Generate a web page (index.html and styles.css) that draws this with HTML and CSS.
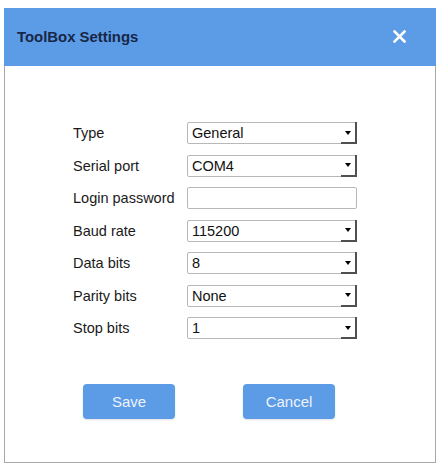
FILE: index.html
```html
<!DOCTYPE html>
<html>
<head>
<meta charset="utf-8">
<link rel="stylesheet" href="styles.css">
</head>
<body>
<div class="dialog">
  <div class="header">
    <span class="title">ToolBox Settings</span>
    <svg class="close" width="13" height="13" viewBox="0 0 13 13"><path d="M1.5 1.5 L11.5 11.5 M11.5 1.5 L1.5 11.5" stroke="#fff" stroke-width="2.6" stroke-linecap="square"/></svg>
  </div>
  <div class="content">
    <div class="form">
      <div class="row"><span class="label">Type</span><div class="select"><span class="value">General</span><span class="arrow"><i class="tri"></i></span></div></div>
      <div class="row"><span class="label">Serial port</span><div class="select"><span class="value">COM4</span><span class="arrow"><i class="tri"></i></span></div></div>
      <div class="row"><span class="label">Login password</span><div class="input"></div></div>
      <div class="row"><span class="label">Baud rate</span><div class="select"><span class="value">115200</span><span class="arrow"><i class="tri"></i></span></div></div>
      <div class="row"><span class="label">Data bits</span><div class="select"><span class="value">8</span><span class="arrow"><i class="tri"></i></span></div></div>
      <div class="row"><span class="label">Parity bits</span><div class="select"><span class="value">None</span><span class="arrow"><i class="tri"></i></span></div></div>
      <div class="row"><span class="label">Stop bits</span><div class="select"><span class="value">1</span><span class="arrow"><i class="tri"></i></span></div></div>
    </div>
    <div class="buttons">
      <button class="btn">Save</button>
      <button class="btn">Cancel</button>
    </div>
  </div>
</div>
</body>
</html>
```
FILE: styles.css
```css
html, body {
  margin: 0;
  padding: 0;
  background: #ffffff;
}
body {
  font-family: "Liberation Sans", Arial, sans-serif;
}
.dialog {
  margin: 8px 0 0 4px;
  width: 432px;
  height: 455px;
  display: flex;
  flex-direction: column;
}
.header {
  height: 58px;
  flex: none;
  background: #5c9be6;
  display: flex;
  align-items: center;
  justify-content: space-between;
  padding: 0 30px 0 13px;
}
.title {
  font-weight: bold;
  font-size: 14.9px;
  color: #172746;
}
.close {
  display: block;
  margin-top: -2px;
}
.content {
  flex: 1;
  border: 1px solid #a9a9a9;
  border-top: none;
  padding: 56px 0 0 68px;
}
.form {
  display: flex;
  flex-direction: column;
  gap: 10.5px;
}
.row {
  display: flex;
  align-items: center;
  height: 22px;
}
.label {
  width: 114px;
  font-size: 14.5px;
  color: #1a1a1a;
}
.select, .input {
  box-sizing: border-box;
  width: 170px;
  height: 22px;
  border: 1px solid #b8b8b8;
  border-radius: 2px;
  display: flex;
  align-items: stretch;
  background: #fff;
}
.value {
  flex: 1;
  font-size: 14.5px;
  color: #111;
  padding-left: 4px;
  line-height: 20px;
}
.arrow {
  width: 14px;
  margin: -1px -1px -1px 0;
  border-right: 2px solid #505050;
  border-bottom: 2px solid #505050;
  display: flex;
  align-items: center;
  justify-content: center;
}
.tri {
  display: block;
  width: 0;
  height: 0;
  border-left: 3.5px solid transparent;
  border-right: 3.5px solid transparent;
  border-top: 4px solid #000;
  margin-top: 1px;
}
.buttons {
  display: flex;
  gap: 68px;
  margin-top: 45px;
  padding-left: 10px;
}
.btn {
  width: 92px;
  height: 35px;
  border: none;
  border-radius: 4px;
  background: #5c9be6;
  color: #eef4fc;
  font-family: "Liberation Sans", Arial, sans-serif;
  font-size: 15px;
  box-shadow: 0 1px 2px rgba(0,0,0,0.12);
  padding: 0;
}
```
